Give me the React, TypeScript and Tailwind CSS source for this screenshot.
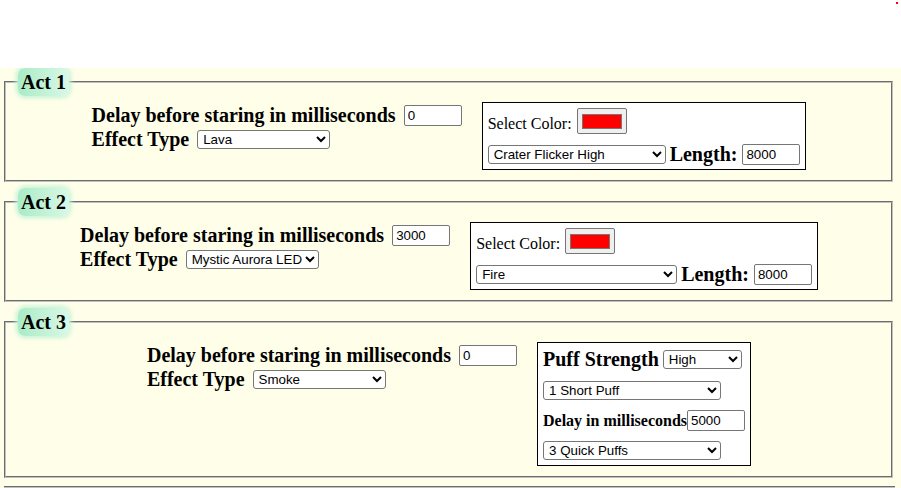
import React from "react";

const selectCls =
  "h-[19px] border border-[#767676] rounded-[3px] bg-white text-black text-[13.33px] leading-[15px] pl-[1px] font-['Liberation_Sans',Arial,sans-serif]";
const inputCls =
  "h-[21px] w-[58px] border border-[#767676] rounded-[2px] bg-white text-black text-[13.33px] px-[3px] font-['Liberation_Sans',Arial,sans-serif]";

function Select({ value, options, width }: { value: string; options: string[]; width: string }) {
  return (
    <select className={`${selectCls} ${width}`} defaultValue={value}>
      {options.map((o) => (
        <option key={o}>{o}</option>
      ))}
    </select>
  );
}

function ColorSwatch() {
  return (
    <button className="flex h-[26px] w-[50px] items-center justify-center rounded-[2px] border border-[#767676] bg-[#efefef]">
      <span className="block h-[15px] w-[40px] border border-[#777777] bg-[#ff0000]" />
    </button>
  );
}

function Act({
  title,
  delay,
  effect,
  children,
}: {
  title: string;
  delay: string;
  effect: string;
  children: React.ReactNode;
}) {
  return (
    <fieldset className="ml-[4px] mr-[8px] mb-[6px] border-2 border-[#c0c0c0] [border-style:groove] pl-[13px] pr-[12px] pt-[7px] pb-[10px]">
      <legend className="-ml-[1px] h-[28px] rounded-[7px] bg-gradient-to-r from-[#a9ecc6] to-[#d9f8e6] px-[3px] text-[20px] font-bold leading-[28px] shadow-[0_0_4px_2px_#c6f3d9]">
        {title}
      </legend>
      <div className="flex items-start justify-center gap-[20px]">
        <div className="flex flex-col">
          <div className="flex h-[24px] items-center gap-[8px]">
            <span className="text-[20px] font-bold leading-[23px]">Delay before staring in milliseconds</span>
            <input className={inputCls} defaultValue={delay} />
          </div>
          <div className="flex h-[24px] items-center gap-[8px]">
            <span className="text-[20px] font-bold leading-[23px]">Effect Type</span>
            <Select
              value={effect}
              width="w-[133px]"
              options={["Lava", "Mystic Aurora LED", "Smoke", "Fire"]}
            />
          </div>
        </div>
        {children}
      </div>
    </fieldset>
  );
}

function ColorBox({ pattern, selWidth }: { pattern: string; selWidth: string }) {
  return (
    <div className="-mt-[1px] flex flex-col gap-[10px] border border-black bg-white px-[5px] pt-[5px] pb-[4px]">
      <div className="flex h-[26px] items-center gap-[5px]">
        <span className="mt-[5px] text-[16px] leading-[18px]">Select Color:</span>
        <ColorSwatch />
      </div>
      <div className="flex h-[21px] items-center">
        <Select
          value={pattern}
          width={selWidth}
          options={["Crater Flicker High", "Fire", "Crater Flicker Low"]}
        />
        <span className="ml-[4px] text-[20px] font-bold leading-[23px]">Length:</span>
        <input className={`${inputCls} ml-[5px]`} defaultValue="8000" />
      </div>
    </div>
  );
}

export default function App() {
  return (
    <div className="flex min-h-[488px] flex-col font-['Liberation_Serif','Times_New_Roman',serif] text-black">
      <div className="relative h-[68px] bg-white">
        <span className="absolute left-[896px] top-[2px] h-[2px] w-[2px] bg-[#ff0000]" />
      </div>
      <div className="flex-1 overflow-hidden bg-[#fefee9]">
        <Act title="Act 1" delay="0" effect="Lava">
          <ColorBox pattern="Crater Flicker High" selWidth="w-[178px]" />
        </Act>
        <Act title="Act 2" delay="3000" effect="Mystic Aurora LED">
          <ColorBox pattern="Fire" selWidth="w-[201px]" />
        </Act>
        <Act title="Act 3" delay="0" effect="Smoke">
          <div className="-mt-[1px] flex flex-col border border-black bg-white px-[5px] pt-[5px] pb-[5px]">
            <div className="flex h-[23px] items-center gap-[4px]">
              <span className="text-[20px] font-bold leading-[23px]">Puff Strength</span>
              <Select value="High" width="w-[79px]" options={["Low", "Medium", "High"]} />
            </div>
            <div className="mt-[10px] flex">
              <Select
                value="1 Short Puff"
                width="w-[178px]"
                options={["1 Short Puff", "2 Short Puffs", "1 Long Puff"]}
              />
            </div>
            <div className="mt-[10px] flex h-[21px] items-center">
              <span className="text-[16px] font-bold leading-[19px]">Delay in milliseconds</span>
              <input className={inputCls} defaultValue="5000" />
            </div>
            <div className="mt-[10px] flex">
              <Select
                value="3 Quick Puffs"
                width="w-[178px]"
                options={["3 Quick Puffs", "2 Quick Puffs", "1 Quick Puff"]}
              />
            </div>
          </div>
        </Act>
        <div className="ml-[4px] mr-[6px] mt-[8px] h-[20px] border-t-2 border-[#c0c0c0] [border-style:groove]" />
      </div>
    </div>
  );
}
